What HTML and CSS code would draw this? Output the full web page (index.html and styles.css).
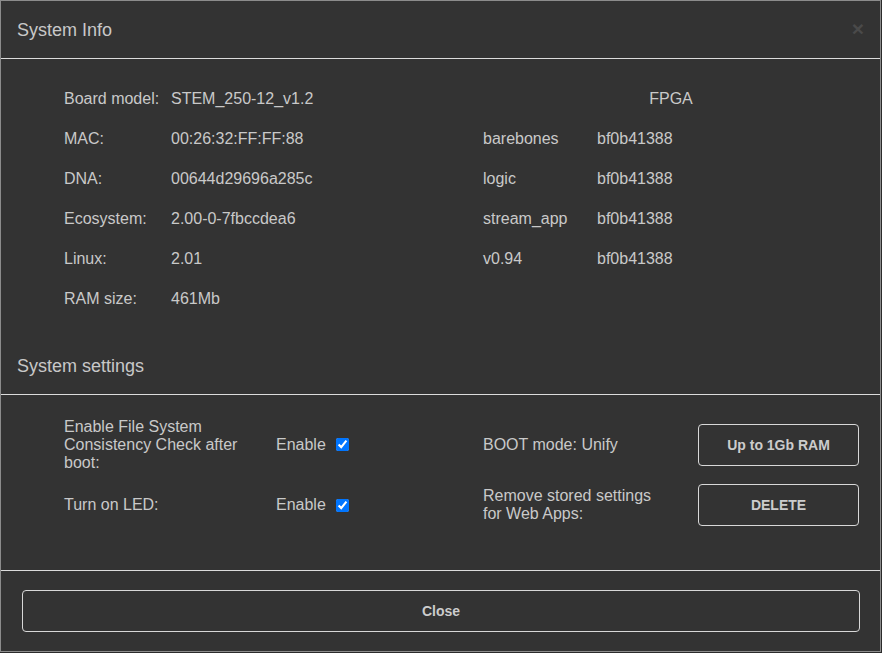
FILE: index.html
```html
<!DOCTYPE html>
<html>
<head>
<meta charset="utf-8">
<link rel="stylesheet" href="styles.css">
</head>
<body>
<div class="modal">
  <div class="header">
    <span class="title">System Info</span>
    <span class="close-x">&times;</span>
  </div>
  <div class="info">
    <div class="col-left">
      <div class="row"><span class="lbl">Board model:</span><span>STEM_250-12_v1.2</span></div>
      <div class="row"><span class="lbl">MAC:</span><span>00:26:32:FF:FF:88</span></div>
      <div class="row"><span class="lbl">DNA:</span><span>00644d29696a285c</span></div>
      <div class="row"><span class="lbl">Ecosystem:</span><span>2.00-0-7fbccdea6</span></div>
      <div class="row"><span class="lbl">Linux:</span><span>2.01</span></div>
      <div class="row"><span class="lbl">RAM size:</span><span>461Mb</span></div>
    </div>
    <div class="col-right">
      <div class="row fpga">FPGA</div>
      <div class="row"><span class="lbl wide">barebones</span><span>bf0b41388</span></div>
      <div class="row"><span class="lbl wide">logic</span><span>bf0b41388</span></div>
      <div class="row"><span class="lbl wide">stream_app</span><span>bf0b41388</span></div>
      <div class="row"><span class="lbl wide">v0.94</span><span>bf0b41388</span></div>
    </div>
  </div>
  <div class="section-title">System settings</div>
  <div class="settings">
    <div class="set-left">
      <div class="set-row tall">
        <span class="set-lbl">Enable File System Consistency Check after boot:</span>
        <label class="chk">Enable <input type="checkbox" checked></label>
      </div>
      <div class="set-row">
        <span class="set-lbl">Turn on LED:</span>
        <label class="chk">Enable <input type="checkbox" checked></label>
      </div>
    </div>
    <div class="set-right">
      <div class="set-row tall">
        <span class="set-lbl2">BOOT mode: Unify</span>
        <button class="btn">Up to 1Gb RAM</button>
      </div>
      <div class="set-row">
        <span class="set-lbl2 narrow">Remove stored settings for Web Apps:</span>
        <button class="btn">DELETE</button>
      </div>
    </div>
  </div>
  <div class="footer">
    <button class="btn close-btn">Close</button>
  </div>
</div>
</body>
</html>
```
FILE: styles.css
```css
* { box-sizing: border-box; }
html, body { margin: 0; padding: 0; background: #2b2b2b; }
body {
  font-family: "Liberation Sans", Arial, sans-serif;
  color: #c9c9c9;
  font-size: 16px;
}
.modal {
  width: 881px;
  height: 652px;
  background: #333333;
  border: 1px solid #8c8c8c;
}
.header {
  height: 58px;
  border-bottom: 1px solid #dcdcdc;
  display: flex;
  align-items: center;
  justify-content: space-between;
  padding: 2px 16px 0 16px;
}
.title { font-size: 18px; color: #c8c8c8; }
.close-x {
  font-size: 21px;
  font-weight: bold;
  color: #4a4a4a;
  line-height: 1;
  margin-top: -5px;
}
.info {
  display: grid;
  grid-template-columns: 419px 376px;
  padding: 20px 0 0 63px;
}
.row {
  height: 40px;
  display: flex;
  align-items: center;
  white-space: nowrap;
}
.lbl { width: 107px; flex: none; }
.lbl.wide { width: 114px; }
.row.fpga { justify-content: center; }
.section-title {
  margin-top: 18px;
  height: 58px;
  border-bottom: 1px solid #dcdcdc;
  display: flex;
  align-items: center;
  padding: 2px 0 0 16px;
  font-size: 18px;
  color: #c8c8c8;
}
.settings {
  height: 176px;
  border-bottom: 1px solid #dcdcdc;
  padding: 22px 0 0 63px;
  display: grid;
  grid-template-columns: 419px 376px;
}
.set-row {
  height: 42px;
  display: flex;
  align-items: center;
  line-height: 18px;
}
.set-row.tall { height: 55px; margin-bottom: 12px; }
.set-lbl { width: 212px; padding-right: 20px; }
.set-lbl2 { width: 215px; }
.set-lbl2.narrow { padding-right: 35px; }
.chk { display: flex; align-items: center; }
.chk input {
  width: 13px;
  height: 13px;
  margin: 0 0 0 10px;
  accent-color: #0075ff;
}
.btn {
  width: 161px;
  height: 42px;
  background: transparent;
  border: 1px solid #d8d8d8;
  border-radius: 4px;
  color: #cccccc;
  font-family: "Liberation Sans", Arial, sans-serif;
  font-weight: bold;
  font-size: 14px;
}
.footer { padding: 19px 20px 0 21px; }
.close-btn { width: 838px; }
```
